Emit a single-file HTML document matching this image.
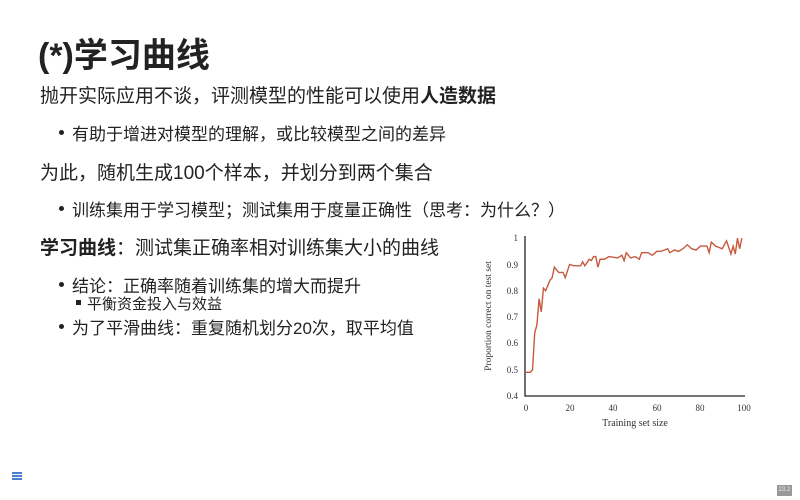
<!DOCTYPE html>
<html><head><meta charset="utf-8"><style>
body{margin:0;width:800px;height:500px;background:#fff;position:relative;overflow:hidden;font-family:"Liberation Sans","Noto Sans CJK SC",sans-serif;color:#222}
.t{position:absolute;white-space:nowrap}
h1{position:absolute;left:38px;top:28px;margin:0;font-size:34px;font-weight:bold;color:#222}
.p{font-size:19px;left:40px}
.b{font-size:17px;left:72px}
.b:before{content:"";position:absolute;left:-13px;top:10px;width:5px;height:5px;border-radius:50%;background:#222}
.s{font-size:15px;left:87px}
.s:before{content:"";position:absolute;left:-11px;top:7px;width:5px;height:5px;background:#222}
</style></head><body>
<h1>(*)学习曲线</h1>
<div class="t p" style="top:81px">抛开实际应用不谈，评测模型的性能可以使用<b>人造数据</b></div>
<div class="t b" style="top:120px">有助于增进对模型的理解，或比较模型之间的差异</div>
<div class="t p" style="top:158px">为此，随机生成100个样本，并划分到两个集合</div>
<div class="t b" style="top:196px">训练集用于学习模型；测试集用于度量正确性（思考：为什么？）</div>
<div class="t p" style="top:233px"><b>学习曲线</b>：测试集正确率相对训练集大小的曲线</div>
<div class="t b" style="top:272px">结论：正确率随着训练集的增大而提升</div>
<div class="t s" style="top:293px">平衡资金投入与效益</div>
<div class="t b" style="top:314px">为了平滑曲线：重复随机划分20次，取平均值</div>
<svg width="800" height="500" style="position:absolute;left:0;top:0" font-family="Liberation Serif,serif" font-size="9" fill="#333">
<path d="M525,236 V396 H745" fill="none" stroke="#222" stroke-width="1.3"/>
<g text-anchor="end">
<text x="518" y="241">1</text><text x="518" y="268">0.9</text><text x="518" y="294">0.8</text><text x="518" y="320">0.7</text><text x="518" y="346">0.6</text><text x="518" y="373">0.5</text><text x="518" y="399">0.4</text>
</g>
<g text-anchor="middle">
<text x="526" y="411">0</text><text x="570" y="411">20</text><text x="613" y="411">40</text><text x="657" y="411">60</text><text x="700" y="411">80</text><text x="744" y="411">100</text>
<text x="635" y="426" font-size="10">Training set size</text>
<text transform="translate(491,316) rotate(-90)" font-size="9.5">Proportion correct on test set</text>
</g>
<polyline transform="translate(526,396) scale(2.18,-263)" vector-effect="non-scaling-stroke" fill="none" stroke="#c8583e" stroke-width="1.4"
points="0,0.09 2,0.09 3,0.1 4,0.24 5,0.27 6,0.37 7,0.32 8,0.41 9,0.4 11,0.44 12,0.45 13,0.49 15,0.47 17,0.47 18,0.45 20,0.5 22,0.495 25,0.495 26,0.51 27,0.495 29,0.52 30,0.515 31,0.53 32,0.53 33,0.49 34,0.52 36,0.52 38,0.53 42,0.525 44,0.535 45,0.515 46,0.545 48,0.525 50,0.53 52,0.52 53,0.545 56,0.545 58,0.535 60,0.55 62,0.55 65,0.56 66,0.545 68,0.555 70,0.55 72,0.56 74,0.575 76,0.56 78,0.555 80,0.57 83,0.57 84,0.545 85,0.585 87,0.57 90,0.56 92,0.59 94,0.54 95,0.57 96,0.54 97,0.6 98,0.56 99,0.6"/>
</svg>
<div class="t" style="left:12px;top:472px;width:10px;height:2px;background:#4a7fd0;box-shadow:0 3px 0 #4a7fd0,0 6px 0 #4a7fd0"></div>
<div class="t" style="left:777px;top:485px;width:15px;height:11px;background:#999;color:#eee;font-size:6px;text-align:center;line-height:11px">23.2</div>
</body></html>
